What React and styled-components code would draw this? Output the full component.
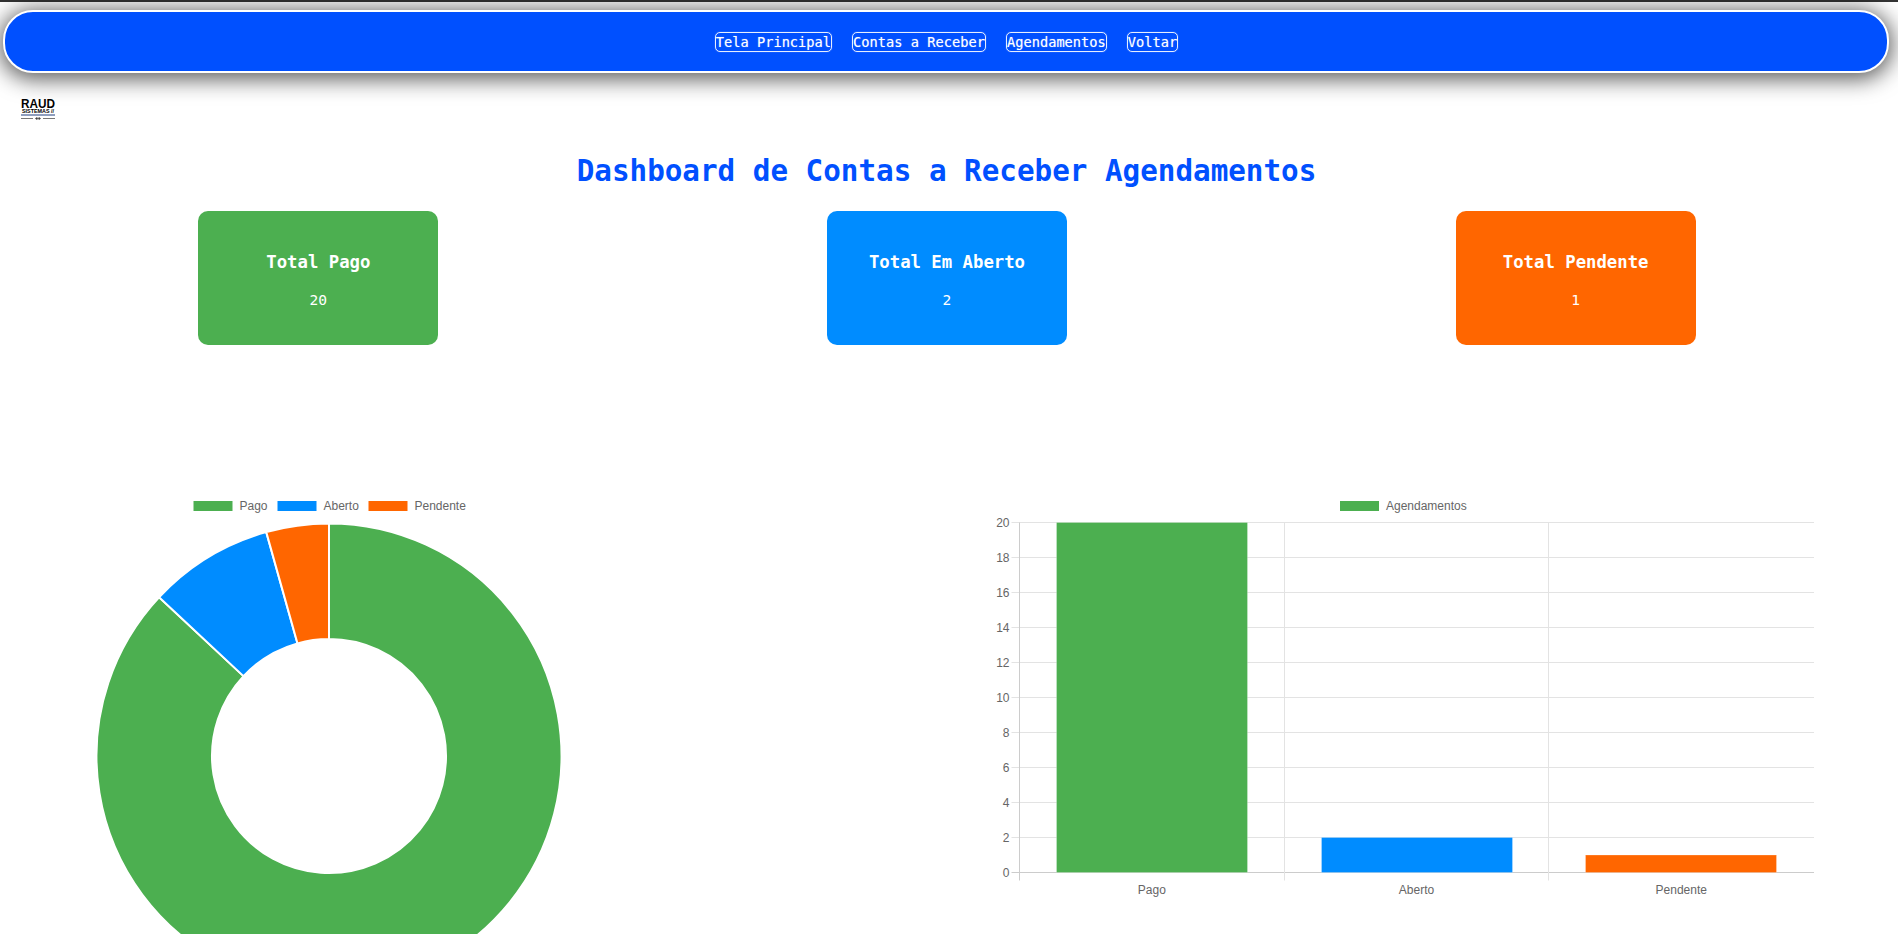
import React from 'react';
import styled, { createGlobalStyle } from 'styled-components';

const GlobalStyle = createGlobalStyle`
  html, body {
    margin: 0;
    height: 100%;
    overflow: hidden;
    background: #fff;
  }
`;

const mono = `"DejaVu Sans Mono", "Liberation Mono", monospace`;
const chartFont = `"Liberation Sans", Arial, sans-serif`;

const GREEN = '#4CAF50';
const BLUE = '#008CFF';
const ORANGE = '#FF6600';

const data = [
  { label: 'Pago', value: 20, color: GREEN },
  { label: 'Aberto', value: 2, color: BLUE },
  { label: 'Pendente', value: 1, color: ORANGE },
];

const Page = styled.div`
  padding: 0 9px 0 3px;
`;

const TopEdge = styled.div`
  height: 2px;
  margin: 0 -9px 8px -3px;
  background: #333;
`;

const Header = styled.header`
  height: 59px;
  padding-left: 1px;
  display: flex;
  align-items: center;
  justify-content: center;
  gap: 20px;
  background: #0050ff;
  border: 2px solid #fff;
  border-radius: 30px;
  box-shadow: 0 3px 22px 3px rgba(0, 0, 0, 0.65);
`;

const NavLink = styled.a`
  height: 18px;
  border: 1px solid rgba(255, 255, 255, 0.9);
  border-radius: 5px;
  box-shadow: 0 0 1px rgba(255, 255, 255, 0.6);
  color: #fff;
  font-family: ${mono};
  font-size: 13.7px;
  line-height: 18px;
  text-shadow: 0 0 1px rgba(255, 255, 255, 0.5);
  white-space: nowrap;
`;

const Logo = styled.svg`
  display: block;
  width: 36px;
  height: 27px;
  margin: 21px 0 0 17px;
  overflow: visible;
`;

const Title = styled.h1`
  margin: 32px 0 22px;
  padding-left: 1px;
  color: #0050ff;
  font-family: ${mono};
  font-size: 29.25px;
  font-weight: 700;
  line-height: 36px;
  text-align: center;
`;

const Cards = styled.section`
  display: flex;
  justify-content: space-around;
  margin: 0 -1px 0 1px;
`;

const Card = styled.div`
  width: 240px;
  height: 134px;
  box-sizing: border-box;
  padding-top: 40px;
  border-radius: 10px;
  background: ${props => props.color};
  color: #fff;
  font-family: ${mono};
  text-align: center;
`;

const CardTitle = styled.h3`
  margin: 0 0 18px;
  font-size: 17.3px;
  font-weight: 700;
  line-height: 22px;
`;

const CardValue = styled.p`
  margin: 0;
  font-size: 14.6px;
  line-height: 18px;
`;

const Charts = styled.section`
  display: flex;
  gap: 320px;
  margin: 145px 0 0 -3px;
`;

const ChartSvg = styled.svg`
  display: block;
  flex: none;
  font-family: ${chartFont};
  font-size: 12px;
`;

const ChartText = styled.text`
  fill: #666;
`;

const polar = (cx, cy, r, a) => [cx + r * Math.sin(a), cy - r * Math.cos(a)];

const arcPath = (cx, cy, r, ri, start, end) => {
  const large = end - start > Math.PI ? 1 : 0;
  const [x1, y1] = polar(cx, cy, r, start);
  const [x2, y2] = polar(cx, cy, r, end);
  const [x3, y3] = polar(cx, cy, ri, end);
  const [x4, y4] = polar(cx, cy, ri, start);
  return `M${x1} ${y1}A${r} ${r} 0 ${large} 1 ${x2} ${y2}L${x3} ${y3}A${ri} ${ri} 0 ${large} 0 ${x4} ${y4}Z`;
};

function Legend({ items }) {
  return items.map(item => (
    <g key={item.text}>
      <rect x={item.x} y="11" width="39" height="10" fill={item.color} />
      <ChartText x={item.x + 46} y="19.5">{item.text}</ChartText>
    </g>
  ));
}

function Doughnut() {
  const cx = 329;
  const cy = 266;
  const total = data.reduce((sum, d) => sum + d.value, 0);
  let angle = 0;
  return (
    <ChartSvg width="660" height="480">
      <Legend
        items={[
          { x: 193.5, color: GREEN, text: 'Pago' },
          { x: 277.5, color: BLUE, text: 'Aberto' },
          { x: 368.5, color: ORANGE, text: 'Pendente' },
        ]}
      />
      {data.map(d => {
        const start = angle;
        angle += (d.value / total) * Math.PI * 2;
        return (
          <path
            key={d.label}
            d={arcPath(cx, cy, 232.5, 117, start, angle)}
            fill={d.color}
            stroke="#fff"
            strokeWidth="2"
          />
        );
      })}
    </ChartSvg>
  );
}

function BarChart() {
  const left = 39.5;
  const step = 264.7;
  const right = 834;
  const yZero = 382.5;
  const unit = 17.5;
  const ticks = [20, 18, 16, 14, 12, 10, 8, 6, 4, 2, 0];
  return (
    <ChartSvg width="850" height="440">
      <Legend items={[{ x: 360, color: GREEN, text: 'Agendamentos' }]} />
      {ticks.map(t => {
        const y = yZero - t * unit;
        return (
          <g key={t}>
            <line x1={left - 8} x2={right} y1={y} y2={y} stroke={t === 0 ? '#ccc' : '#e3e3e3'} />
            <ChartText x={left - 10} y={y + 4} textAnchor="end">{t}</ChartText>
          </g>
        );
      })}
      {[0, 1, 2].map(i => {
        const x = Math.round(left + i * step - 0.5) + 0.5;
        return (
          <line
            key={i}
            x1={x}
            x2={x}
            y1={yZero - 350}
            y2={yZero + 8}
            stroke={i === 0 ? '#ccc' : '#e3e3e3'}
          />
        );
      })}
      {data.map((d, i) => (
        <g key={d.label}>
          <rect
            x={Math.round(left + i * step + 36.5) + 0.5}
            y={yZero - d.value * unit}
            width="191"
            height={d.value * unit}
            fill={d.color}
            stroke="rgba(255, 255, 255, 0.25)"
          />
          <ChartText x={left + (i + 0.5) * step} y="404" textAnchor="middle">{d.label}</ChartText>
        </g>
      ))}
    </ChartSvg>
  );
}

export default function App() {
  return (
    <>
      <GlobalStyle />
      <Page>
        <TopEdge />
        <Header>
          <NavLink>Tela Principal</NavLink>
          <NavLink>Contas a Receber</NavLink>
          <NavLink>Agendamentos</NavLink>
          <NavLink>Voltar</NavLink>
        </Header>
        <Logo viewBox="-1 -4 36 27">
          <text x="0" y="9.5" fontFamily={chartFont} fontWeight="700" fontSize="13" textLength="34" lengthAdjust="spacingAndGlyphs">RAUD</text>
          <text x="1" y="15" fontFamily={chartFont} fontWeight="700" fontSize="5.5" textLength="32" lengthAdjust="spacingAndGlyphs">SISTEMAS //</text>
          <rect x="0" y="16.5" width="34" height="1" fill="#1f3f7f" />
          <rect x="0" y="20" width="12" height="1" fill="#777" />
          <rect x="22" y="20" width="12" height="1" fill="#777" />
          <path d="M14 20.5l2-1.5 1 1.5 1-1.5 2 1.5-2 1.5-1-1.5-1 1.5z" fill="#444" />
        </Logo>
        <Title>Dashboard de Contas a Receber Agendamentos</Title>
        <Cards>
          <Card color={GREEN}>
            <CardTitle>Total Pago</CardTitle>
            <CardValue>20</CardValue>
          </Card>
          <Card color={BLUE}>
            <CardTitle>Total Em Aberto</CardTitle>
            <CardValue>2</CardValue>
          </Card>
          <Card color={ORANGE}>
            <CardTitle>Total Pendente</CardTitle>
            <CardValue>1</CardValue>
          </Card>
        </Cards>
        <Charts>
          <Doughnut />
          <BarChart />
        </Charts>
      </Page>
    </>
  );
}
